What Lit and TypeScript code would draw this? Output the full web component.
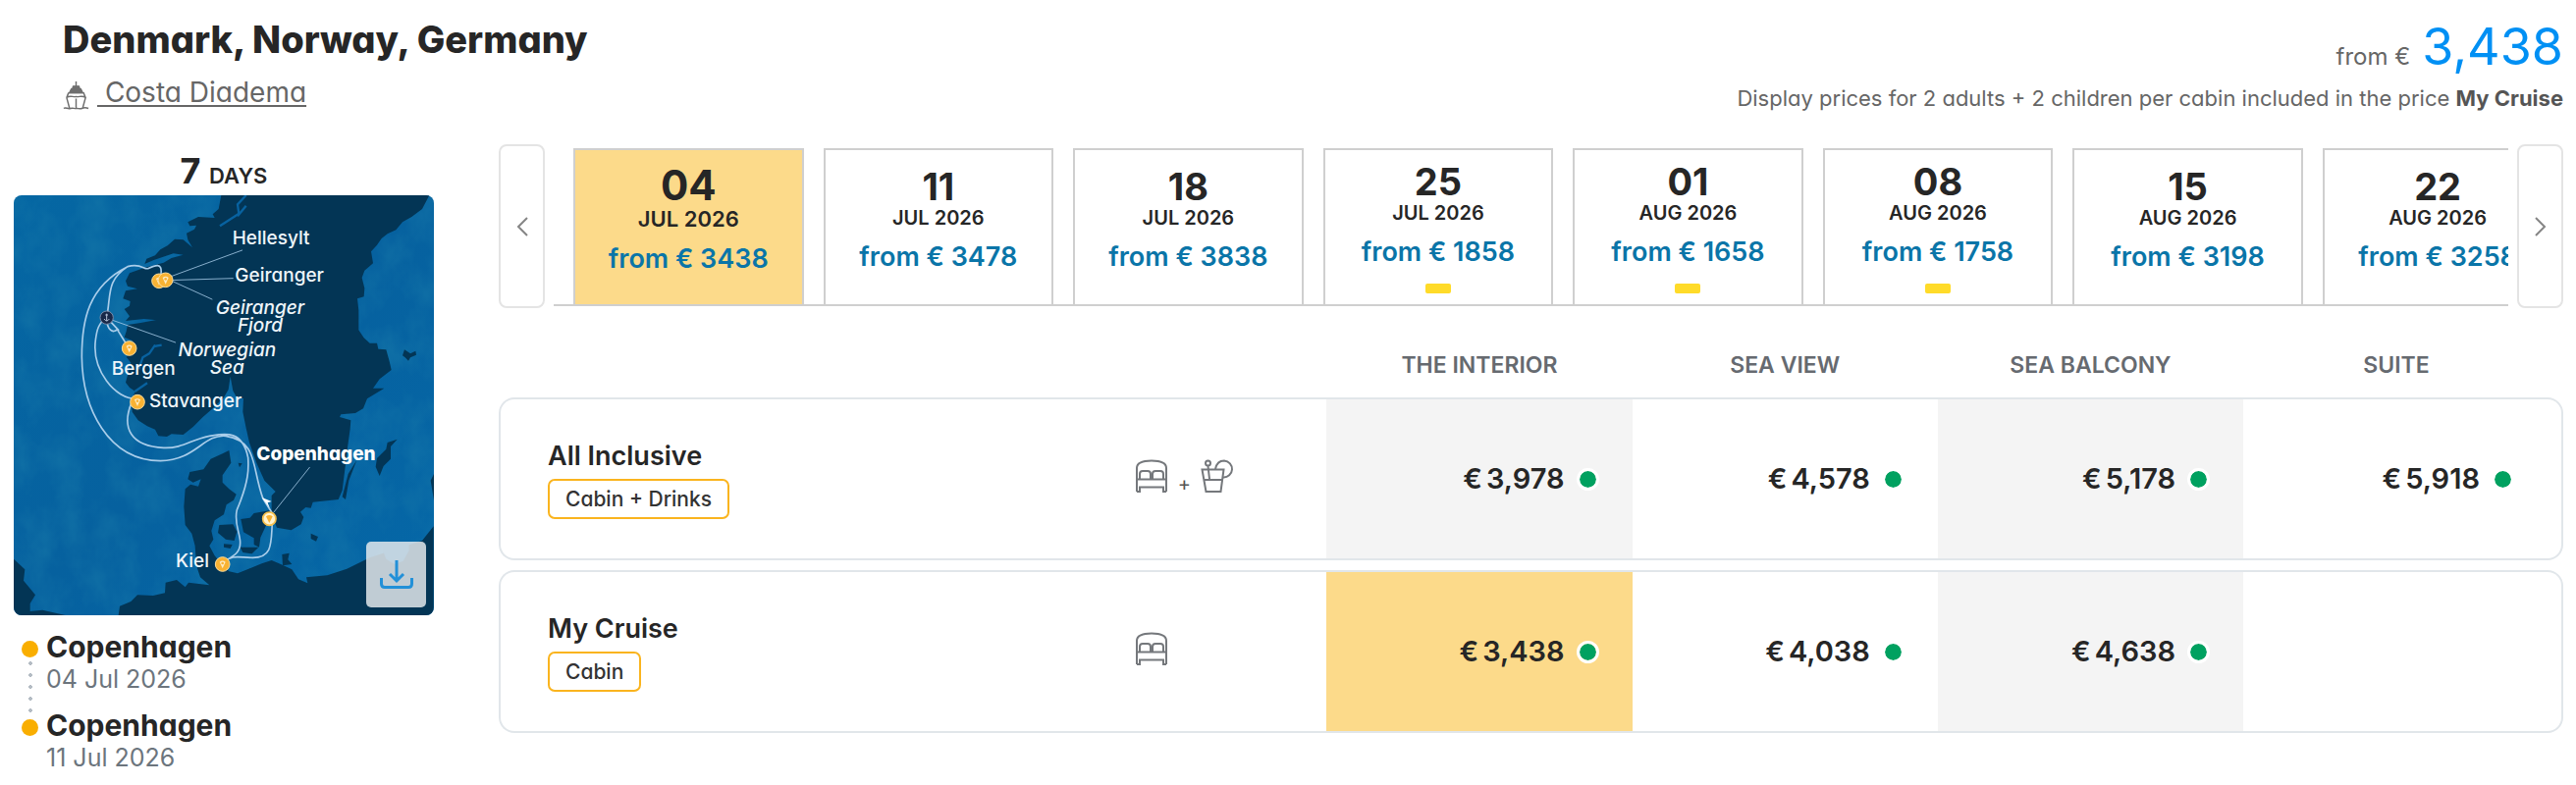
import { LitElement, html, css, svg, nothing } from "lit";
import { customElement, property, state } from "lit/decorators.js";
import { classMap } from "lit/directives/class-map.js";

interface Departure {
  day: string;
  month: string;
  price: number;
  promo?: boolean;
}

interface Offer {
  name: string;
  tag: string;
  drinks: boolean;
  prices: (string | null)[];
}

const DEPARTURES: Departure[] = [
  { day: "04", month: "JUL 2026", price: 3438 },
  { day: "11", month: "JUL 2026", price: 3478 },
  { day: "18", month: "JUL 2026", price: 3838 },
  { day: "25", month: "JUL 2026", price: 1858, promo: true },
  { day: "01", month: "AUG 2026", price: 1658, promo: true },
  { day: "08", month: "AUG 2026", price: 1758, promo: true },
  { day: "15", month: "AUG 2026", price: 3198 },
  { day: "22", month: "AUG 2026", price: 3258 },
];

const CABINS = ["THE INTERIOR", "SEA VIEW", "SEA BALCONY", "SUITE"];

const OFFERS: Offer[] = [
  {
    name: "All Inclusive",
    tag: "Cabin + Drinks",
    drinks: true,
    prices: ["3,978", "4,578", "5,178", "5,918"],
  },
  {
    name: "My Cruise",
    tag: "Cabin",
    drinks: false,
    prices: ["3,438", "4,038", "4,638", null],
  },
];

const bedIcon = html`<svg class="icon" viewBox="0 0 34 34" role="img" aria-label="Cabin">
  <path d="M2 33V9C2 4 8 1.500 17 1.500S32 4 32 9V33M2 20.500H32M2 33H5V28.500H29V33H32M5 20V15C5 13 6 12 8 12H13C15 12 16 13 16 15V20M18 20V15C18 13 19 12 21 12H26C28 12 29 13 29 15V20" />
</svg>`;

const drinkIcon = html`<svg class="icon" viewBox="0 0 34 34" role="img" aria-label="Drinks">
  <path d="M1.500 10.500H23.500L20.500 33H5.500ZM3 21H22M9 20L7.500 7" />
  <circle cx="7.500" cy="4" r="2.500" />
  <path d="M15 10C16 5 19 1.500 24 1.500A8.500 8.500 0 0 1 23 18.500" />
</svg>`;

const shipIcon = html`<svg class="ship" viewBox="0 0 28 30" aria-hidden="true">
  <path d="M14 0V5M11 5H17L18 8H10ZM9 8H19L21 12H7Z" fill="#6e6e6e" />
  <path d="M6 12H22L24 17M6 12L4 17M4 17C8 14 11 17 14 16C17 17 20 14 24 17L21 28M4 17L7 28M14 18V28M1 28.500C3 26.500 5 29.500 8 28.500S12 29 14 28.500S18 29.500 20 28.500S25 27.500 27 28.500" />
</svg>`;

const pin = (x: number, y: number) => svg`
  <circle cx=${x} cy=${y} r="22" fill="#f9b233" stroke="#fbdc9a" stroke-width="3" />
  <path d="M${x - 9} ${y - 7}Q${x} ${y - 14} ${x + 9} ${y - 7}L${x} ${y + 13}Z" fill="#fdebc4" />
  <circle cx=${x} cy=${y - 3} r="4" fill="#f9b233" />`;

@customElement("route-map")
export class RouteMap extends LitElement {
  static styles = css`
    :host {
      display: block;
      position: relative;
      aspect-ratio: 1;
      border-radius: 8px;
      overflow: hidden;
    }
    .map {
      display: block;
      width: 100%;
      height: 100%;
    }
    .label {
      font-size: 57px;
      font-weight: 500;
      fill: #eef5fa;
    }
    .sea {
      font-style: italic;
      text-anchor: middle;
    }
    .home {
      font-weight: 800;
      fill: #fff;
    }
    .download {
      position: absolute;
      right: 8px;
      bottom: 8px;
      width: 61px;
      height: 67px;
      padding: 0;
      border: 0;
      border-radius: 5px;
      background: rgba(229, 233, 237, 0.84);
      display: grid;
      place-items: center;
      cursor: pointer;
    }
    .download svg {
      width: 34px;
      height: 30px;
      fill: none;
      stroke: #2290d8;
      stroke-width: 3;
    }
  `;

  render() {
    return html`
      <svg class="map" viewBox="42 28 1284 1284" role="img" aria-label="Cruise route map">
        <defs>
          <linearGradient id="water" x1="0" y1="0" x2="1" y2="1">
            <stop offset="0" stop-color="#0567a3" />
            <stop offset="0.5" stop-color="#06619f" />
            <stop offset="1" stop-color="#0568a8" />
          </linearGradient>
          <filter id="grain" x="0" y="0" width="100%" height="100%">
            <feTurbulence type="fractalNoise" baseFrequency="0.012 0.009" numOctaves="4" seed="4" />
            <feColorMatrix values="0 0 0 0 0.01  0 0 0 0 0.2  0 0 0 0 0.4  0.9 0 0 0 -0.32" />
          </filter>
        </defs>
        <rect x="42" y="28" width="1284" height="1284" fill="url(#water)" />
        <rect x="42" y="28" width="1284" height="1284" filter="url(#grain)" />
        <g fill="#033555">
          <path d="M676 28L668 70L650 86L656 97L606 94L574 110L580 122L600 120L594 132L570 144L574 164L588 188L560 164L534 162L512 182L490 194L474 212L448 222L442 238L470 226L530 206L560 210L524 220L500 234L440 250L396 266L384 290L390 306L420 314L384 320L376 344L398 352L396 366L380 376L396 398L384 412L440 406L480 410L520 402L524 388L514 402L430 418L390 424L386 444L380 462L404 472L412 500L386 522L400 540L392 570L384 600L396 616L414 628L402 650L404 690L422 716L450 734L474 744L484 764L510 766L524 758L560 760L590 736L620 706L650 680L684 646L698 622L704 582L712 626L722 644L744 650L742 690L752 740L762 784L784 846L808 900L842 934L830 946L830 1000L846 1044L890 1052L920 1034L928 1012L918 996L934 982L950 984L956 966L1034 958L1046 930L1056 850L1062 800L1070 742L1072 716L1038 706L1042 698L1086 694L1110 680L1122 650L1174 618L1140 618L1160 590L1196 562L1190 536L1180 500L1156 498L1152 480L1130 480L1112 464L1096 440L1096 380L1092 344L1112 338L1114 312L1106 280L1114 258L1140 236L1134 200L1152 180L1166 160L1184 146L1210 134L1230 110L1258 94L1290 70L1312 28Z" />
          <path d="M700 808L706 846L680 884L680 906L700 926L722 942L714 960L692 974L684 1004L656 1022L646 1054L652 1080L640 1100L656 1130L672 1150L700 1178L726 1184L760 1170L800 1154L830 1144L858 1156L892 1172L912 1202L940 1214L936 1196L1000 1190L1060 1170L1130 1136L1240 1100L1290 1084L1325 1040V1312H362L366 1284L400 1270L420 1250L468 1252L504 1244L506 1212L540 1204L566 1226L576 1212L640 1220L612 1196L600 1160L596 1100L586 1062L566 1036L562 980L566 926L582 912L606 918L614 896L590 906L574 896L580 874L622 866L644 834L680 818Z" />
          <path d="M42 1140L76 1172L72 1206L108 1250L92 1276L92 1300L130 1296L200 1312H42Z" />
          <path d="M670 1036L712 1034L724 1056L716 1084L690 1080L666 1060Z" />
          <path d="M736 1018L764 1014L776 1000L824 992L830 1014L812 1040L796 1074L792 1104L776 1096L776 1076L744 1058Z" />
          <path d="M734 1104L790 1104L770 1124L742 1120ZM684 1094L710 1096L704 1108L684 1104ZM728 846L740 848L732 860Z" />
          <path d="M1214 774L1184 784L1180 804L1152 832L1148 858L1160 886L1172 856L1194 834L1194 796Z" />
          <path d="M1090 838L1064 880L1046 950L1056 958L1066 900Z" />
          <path d="M1236 500L1254 512L1270 504L1272 516L1254 524L1248 534L1238 524L1230 518ZM950 1062L972 1072L966 1086L950 1078ZM862 1126L884 1122L880 1142L892 1156L864 1160ZM1316 900L1326 880V960Z" />
        </g>
        <g fill="none" stroke="#0862a0" stroke-width="7" stroke-linejoin="round">
          <path d="M752 28L726 56L730 84L700 104L672 122M752 60L726 92M474 486L456 512L436 524L424 560M494 486L470 490M412 628L450 602" />
        </g>
        <path d="M1170 1114V1090H1250V1114L1232 1146L1206 1156L1180 1140Z" fill="#0862a0" />
        <g fill="none" stroke="#a9cdea" stroke-width="5" stroke-linecap="round">
          <path d="M492 268C496 232 474 242 452 252C440 256 430 234 390 246C270 306 250 410 250 522C252 680 330 838 490 840C600 838 620 758 690 764C790 780 768 860 804 956L832 1000M832 1030C828 1090 834 1136 772 1136C730 1136 710 1126 682 1150C714 1130 734 1122 734 1090C734 1060 714 1030 724 990C762 900 760 860 758 830C740 740 680 758 640 764C580 776 560 802 500 800C400 796 370 740 402 662M420 650C350 654 280 560 292 470C296 440 300 420 326 402M326 402C340 330 324 290 390 246M326 402C326 440 346 452 358 438L394 496M326 402L362 440" />
          <g stroke-width="3" opacity="0.8">
            <path d="M512 280L740 196M512 288L712 282M512 284L648 346M344 410L536 478M836 998L946 860" />
          </g>
        </g>
        <path d="M800 952L830 964L818 968L824 984Z" fill="#fff" />
        ${pin(486, 290)} ${pin(506, 287)} ${pin(395, 496)} ${pin(420, 660)} ${pin(680, 1156)}
        <circle cx="823" cy="1017" r="20" fill="#fff3cf" stroke="#f6c04d" stroke-width="5" />
        <path d="M813 1010Q823 1002 833 1010L823 1030Z" fill="#f9b233" />
        <circle cx="326" cy="402" r="20" fill="#182848" stroke="#7b8ba8" stroke-width="3" />
        <path d="M326 390V412M318 406Q326 418 334 406M322 394H330" fill="none" stroke="#b7c4d8" stroke-width="3" />
        <text class="label" x="710" y="178">Hellesylt</text>
        <text class="label" x="718" y="292">Geiranger</text>
        <text class="label sea" x="795" y="391">Geiranger</text>
        <text class="label sea" x="795" y="445">Fjord</text>
        <text class="label sea" x="694" y="520">Norwegian</text>
        <text class="label sea" x="694" y="575">Sea</text>
        <text class="label" x="341" y="577">Bergen</text>
        <text class="label" x="456" y="676">Stavanger</text>
        <text class="label home" x="784" y="838">Copenhagen</text>
        <text class="label" x="537" y="1166">Kiel</text>
      </svg>
      <button class="download" aria-label="Download map">
        <svg viewBox="0 0 34 30" aria-hidden="true">
          <path d="M17 0V21M10 14L17 21L24 14M1.500 18V24Q1.500 27.500 5 27.500H29Q32.500 27.500 32.500 24V18" />
        </svg>
      </button>
    `;
  }
}

@customElement("departure-card")
export class DepartureCard extends LitElement {
  @property({ attribute: false }) departure!: Departure;
  @property({ type: Boolean }) selected = false;

  static styles = css`
    :host {
      display: block;
    }
    .card {
      box-sizing: border-box;
      width: 100%;
      height: 100%;
      border: 2px solid #cfcfcf;
      border-bottom: 0;
      background: #fff;
      padding: 0 0 16px;
      display: flex;
      flex-direction: column;
      align-items: center;
      justify-content: center;
      font: inherit;
      font-weight: 600;
      color: #262626;
      cursor: pointer;
      white-space: nowrap;
    }
    .has-promo {
      padding-bottom: 0;
    }
    .day {
      font-size: 38px;
      line-height: 40px;
      font-weight: 700;
    }
    .month {
      font-size: 20px;
      line-height: 24px;
    }
    .price {
      margin-top: 12px;
      font-size: 27px;
      line-height: 32px;
      color: #0a75a8;
    }
    .promo {
      width: 26px;
      height: 10px;
      margin-top: 16px;
      border-radius: 2px;
      background: #ffdb29;
    }
    .selected {
      background: #fcda8a;
    }
    .selected .day {
      font-size: 42px;
      line-height: 42px;
    }
    .selected .month {
      font-size: 22px;
      line-height: 26px;
    }
  `;

  render() {
    const d = this.departure;
    return html`<button
      class=${classMap({ card: true, selected: this.selected, "has-promo": !!d.promo })}
      aria-pressed=${this.selected ? "true" : "false"}
    >
      <span class="day">${d.day}</span>
      <span class="month">${d.month}</span>
      <span class="price">from € ${d.price}</span>
      ${d.promo ? html`<span class="promo"></span>` : nothing}
    </button>`;
  }
}

@customElement("app-root")
export class AppRoot extends LitElement {
  @state() private current = 0;

  static styles = css`
    :host {
      display: block;
      min-height: 100vh;
      background: #fff;
      color: #262626;
      font-family: Inter, "Open Sans", sans-serif;
      font-feature-settings: "cv11";
    }
    .top {
      display: flex;
      justify-content: space-between;
      padding: 18px 13px 0 64px;
    }
    .title {
      margin: 0;
      font-size: 38px;
      line-height: 44px;
      font-weight: 800;
    }
    .ship-line {
      display: flex;
      align-items: center;
      gap: 8px;
      margin-top: 14px;
      line-height: 36px;
    }
    .ship {
      width: 27px;
      height: 29px;
      margin-top: 6px;
      fill: none;
      stroke: #6e6e6e;
      stroke-width: 1.500;
    }
    .ship-link {
      color: #666;
      font-size: 28px;
      white-space: pre;
      text-underline-offset: 3px;
    }
    .summary {
      display: flex;
      flex-direction: column;
      align-items: flex-end;
      color: #666;
    }
    .from {
      display: flex;
      align-items: baseline;
      gap: 12px;
      font-size: 24px;
      line-height: 30px;
    }
    .amount {
      font-size: 52px;
      line-height: 60px;
      font-weight: 400;
      color: #0090f4;
    }
    .note {
      font-size: 22px;
      line-height: 32px;
      margin-top: 6px;
    }
    .note b {
      color: #555;
      font-weight: 700;
    }
    .body {
      display: grid;
      grid-template-columns: 428px minmax(0, 1fr);
      gap: 66px;
      padding: 0 13px 0 14px;
      margin-top: 31px;
      align-items: start;
    }
    .side {
      padding-top: 2px;
    }
    .days {
      text-align: center;
      font-size: 36px;
      line-height: 50px;
      font-weight: 700;
    }
    .days small {
      font-size: 22px;
      line-height: 22px;
      font-weight: 600;
    }
    .stops {
      list-style: none;
      margin: 12px 0 0;
      padding: 0 0 0 8px;
    }
    .stop {
      display: grid;
      grid-template-columns: 17px 1fr;
      gap: 8px;
      height: 80px;
    }
    .rail {
      display: flex;
      flex-direction: column;
      align-items: center;
      padding-top: 14px;
    }
    .bullet {
      flex: none;
      width: 17px;
      height: 17px;
      border-radius: 50%;
      background: #f9ae00;
    }
    .dots {
      width: 4px;
      flex: 1;
      margin-bottom: -12px;
      background: radial-gradient(circle, #b4bcc4 2px, transparent 2px) 0 0 / 4px 12px;
    }
    .port {
      font-size: 30px;
      line-height: 40px;
      font-weight: 700;
    }
    .port-date {
      font-size: 25px;
      line-height: 26px;
      color: #6c757d;
    }
    .carousel {
      display: flex;
      gap: 9px;
      height: 167px;
    }
    .arrow {
      flex: none;
      width: 47px;
      padding: 0;
      background: #fff;
      border: 2px solid #e4e4e4;
      border-radius: 8px;
      display: grid;
      place-items: center;
      cursor: pointer;
    }
    .arrow svg {
      width: 12px;
      height: 20px;
      fill: none;
      stroke: #858585;
      stroke-width: 2;
    }
    .viewport {
      flex: 1;
      min-width: 0;
      display: flex;
      gap: 20px;
      box-sizing: border-box;
      margin: 4px 0 2px;
      padding-left: 20px;
      border-bottom: 2px solid #cfcfcf;
      overflow: hidden;
    }
    .slide {
      flex: 0 0 11.9%;
    }
    .offers {
      width: 100%;
      table-layout: fixed;
      border-collapse: separate;
      border-spacing: 0 10px;
      margin-top: 25px;
    }
    .icons-col {
      width: 9.3%;
    }
    .cabin-col {
      width: 14.8%;
    }
    .last-col {
      width: 15.5%;
    }
    .cabin {
      height: 46px;
      padding: 0;
      font-size: 23px;
      font-weight: 600;
      color: #666a70;
    }
    .cabin:last-child {
      padding-right: 14px;
    }
    .cell {
      box-sizing: border-box;
      height: 166px;
      padding: 0;
      border: solid #e1e6ea;
      border-width: 2px 0;
      vertical-align: middle;
      text-align: left;
    }
    .name-cell {
      padding-left: 48px;
      border-left-width: 2px;
      border-radius: 16px 0 0 16px;
    }
    .name {
      font-size: 27px;
      line-height: 34px;
      font-weight: 600;
    }
    .tag {
      display: inline-block;
      margin-top: 6px;
      padding: 0 16px;
      border: 2px solid #fab41e;
      border-radius: 7px;
      font-size: 21px;
      line-height: 37px;
      font-weight: 500;
      color: #333;
    }
    .icons {
      display: flex;
      align-items: flex-end;
      gap: 10px;
      padding-bottom: 6px;
      font-size: 20px;
      line-height: 18px;
      color: #555;
    }
    .icon {
      width: 34px;
      height: 34px;
      fill: none;
      stroke: #75787c;
      stroke-width: 2;
    }
    .price-cell {
      padding-right: 34px;
    }
    .price-cell:last-child {
      padding-right: 48px;
      border-right-width: 2px;
      border-radius: 0 16px 16px 0;
    }
    .shaded {
      background: #f4f4f4;
    }
    .chosen {
      background: #fcda8a;
    }
    .offer {
      display: flex;
      align-items: center;
      justify-content: flex-end;
      gap: 12px;
      width: 100%;
      padding: 0;
      border: 0;
      background: none;
      font: inherit;
      font-size: 29px;
      line-height: 36px;
      font-weight: 600;
      color: #262626;
      cursor: pointer;
    }
    .status {
      width: 17px;
      height: 17px;
      border: 3px solid #fff;
      border-radius: 50%;
      background: #00a160;
      background-clip: padding-box;
    }
    .price {
      display: flex;
      gap: 4px;
    }
  `;

  private renderOffer(o: Offer) {
    return html`<tr>
      <th class="cell name-cell" scope="row">
        <div class="name">${o.name}</div>
        <span class="tag">${o.tag}</span>
      </th>
      <td class="cell">
        <div class="icons">
          ${bedIcon}${o.drinks ? html`<span>+</span>${drinkIcon}` : nothing}
        </div>
      </td>
      ${o.prices.map(
        (p, i) => html`<td
          class=${classMap({
            cell: true,
            "price-cell": true,
            shaded: i % 2 === 0,
            chosen: o.name === "My Cruise" && i === 0,
          })}
        >
          ${p
            ? html`<button class="offer">
                <span class="price"><span>€</span><span>${p}</span></span>
                <span class="status"></span>
              </button>`
            : nothing}
        </td>`
      )}
    </tr>`;
  }

  render() {
    return html`
      <header class="top">
        <div>
          <h1 class="title">Denmark, Norway, Germany</h1>
          <div class="ship-line">${shipIcon}<a class="ship-link" href="#ship"> Costa Diadema</a></div>
        </div>
        <div class="summary">
          <div class="from"><span>from €</span><span class="amount">3,438</span></div>
          <div class="note">
            Display prices for 2 adults + 2 children per cabin included in the price <b>My Cruise</b>
          </div>
        </div>
      </header>
      <main class="body">
        <aside class="side">
          <div class="days">7 <small>DAYS</small></div>
          <route-map></route-map>
          <ul class="stops">
            <li class="stop">
              <div class="rail"><span class="bullet"></span><span class="dots"></span></div>
              <div>
                <div class="port">Copenhagen</div>
                <div class="port-date">04 Jul 2026</div>
              </div>
            </li>
            <li class="stop">
              <div class="rail"><span class="bullet"></span></div>
              <div>
                <div class="port">Copenhagen</div>
                <div class="port-date">11 Jul 2026</div>
              </div>
            </li>
          </ul>
        </aside>
        <section>
          <div class="carousel">
            <button class="arrow" aria-label="Previous dates">
              <svg viewBox="0 0 12 20" aria-hidden="true"><path d="M11 1L2 10L11 19" /></svg>
            </button>
            <div class="viewport">
              ${DEPARTURES.map(
                (d, i) => html`<departure-card
                  class="slide"
                  .departure=${d}
                  ?selected=${i === this.current}
                  @click=${() => (this.current = i)}
                ></departure-card>`
              )}
            </div>
            <button class="arrow" aria-label="Next dates">
              <svg viewBox="0 0 12 20" aria-hidden="true"><path d="M1 1L10 10L1 19" /></svg>
            </button>
          </div>
          <table class="offers">
            <colgroup>
              <col />
              <col class="icons-col" />
              <col class="cabin-col" />
              <col class="cabin-col" />
              <col class="cabin-col" />
              <col class="last-col" />
            </colgroup>
            <thead>
              <tr>
                <td colspan="2"></td>
                ${CABINS.map((c) => html`<th class="cabin" scope="col">${c}</th>`)}
              </tr>
            </thead>
            <tbody>
              ${OFFERS.map((o) => this.renderOffer(o))}
            </tbody>
          </table>
        </section>
      </main>
    `;
  }
}
